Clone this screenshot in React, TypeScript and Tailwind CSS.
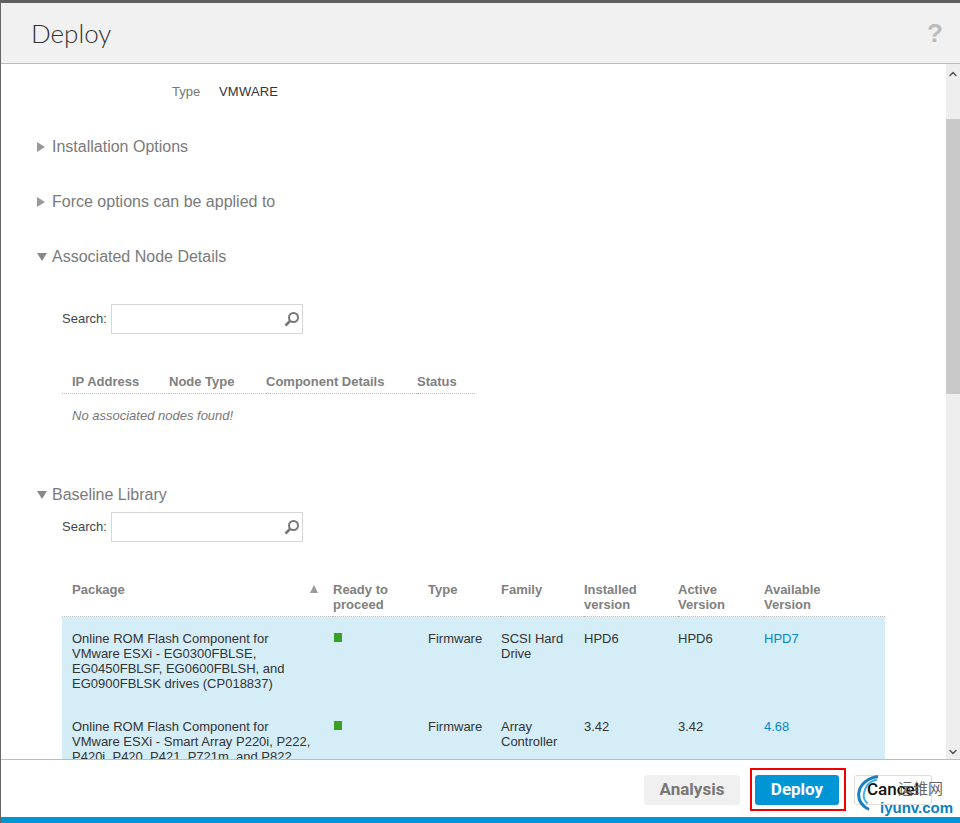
import React from "react";
import { ChevronDown, ChevronUp } from "lucide-react";

const rows = [
  {
    name: "Online ROM Flash Component for VMware ESXi - EG0300FBLSE, EG0450FBLSF, EG0600FBLSH, and EG0900FBLSK drives (CP018837)",
    type: "Firmware",
    family: "SCSI Hard Drive",
    installed: "HPD6",
    active: "HPD6",
    available: "HPD7",
  },
  {
    name: "Online ROM Flash Component for VMware ESXi - Smart Array P220i, P222, P420i, P420, P421, P721m, and P822",
    type: "Firmware",
    family: "Array Controller",
    installed: "3.42",
    active: "3.42",
    available: "4.68",
  },
];

const SearchIcon = () => (
  <svg width="16" height="16" viewBox="0 0 16 16" fill="none" stroke="#777" className="absolute right-[2px] top-[6px]">
    <circle cx="9.5" cy="6.5" r="4.5" strokeWidth="2" />
    <path d="M6 10 L1.5 14.5" strokeWidth="2.6" />
  </svg>
);

const SearchBox = () => (
  <div className="flex items-center text-[13px] text-[#444]">
    <span className="w-[49px]">Search:</span>
    <div className="relative h-[30px] w-[192px] border border-[#d6d6d6] bg-white">
      <SearchIcon />
    </div>
  </div>
);

const Section = ({ title, open }: { title: string; open?: boolean }) => (
  <div className="flex h-[22px] items-center text-[16px] text-[#7a7a7a]">
    <span className="flex w-[15px] items-center">
      {open ? (
        <span className="h-0 w-0 border-x-[5px] border-t-[8px] border-x-transparent border-t-[#888]" />
      ) : (
        <span className="h-0 w-0 border-y-[5px] border-l-[8px] border-y-transparent border-l-[#999]" />
      )}
    </span>
    {title}
  </div>
);

const th = "border-b border-dotted border-[#bbb] text-left align-top font-bold text-[#808080]";

export default function App() {
  return (
    <div className="relative flex h-[823px] w-[960px] flex-col overflow-hidden border-l border-[#666] bg-white font-['Liberation_Sans',Arial,sans-serif]">
      <div className="h-[3px] shrink-0 bg-[#5f5f5f]" />
      <header className="flex h-[61px] shrink-0 items-center justify-between border-b border-[#bdbdbd] bg-[#f1f1f1] pl-[30px] pr-[17px]">
        <h1 className="font-['Lato',sans-serif] text-[26px] font-light text-[#333]">Deploy</h1>
        <span className="text-[26px] font-bold text-[#bbb]">?</span>
      </header>

      <div className="flex min-h-0 flex-1">
        <main className="min-w-0 flex-1 overflow-hidden pl-[36px] pt-[18px]">
          <div className="flex h-[20px] items-center pl-[135px] text-[13px]">
            <span className="w-[47px] text-[#777]">Type</span>
            <span className="tracking-[0.2px] text-[#333]">VMWARE</span>
          </div>

          <div className="mt-[34px] flex flex-col gap-[33px]">
            <Section title="Installation Options" />
            <Section title="Force options can be applied to" />
            <Section title="Associated Node Details" open />
          </div>

          <div className="ml-[25px] mt-[36px]">
            <SearchBox />
          </div>

          <table className="ml-[25px] mt-[40px] w-[413px] table-fixed border-separate border-spacing-0 text-[13px] leading-[15px]">
            <thead>
              <tr>
                <th className={`${th} w-[107px] pb-[4px] pl-[10px]`}>IP Address</th>
                <th className={`${th} w-[97px] pb-[4px]`}>Node Type</th>
                <th className={`${th} w-[151px] pb-[4px]`}>Component Details</th>
                <th className={`${th} pb-[4px]`}>Status</th>
              </tr>
            </thead>
            <tbody>
              <tr>
                <td colSpan={4} className="pl-[10px] pt-[14px] italic text-[#777]">
                  No associated nodes found!
                </td>
              </tr>
            </tbody>
          </table>

          <div className="mt-[61px]">
            <Section title="Baseline Library" open />
          </div>
          <div className="ml-[25px] mt-[6px]">
            <SearchBox />
          </div>

          <table className="ml-[25px] mt-[40px] w-[823px] table-fixed border-separate border-spacing-0 text-[13px] leading-[15px]">
            <thead>
              <tr>
                <th className={`${th} relative w-[271px] pb-[4px] pl-[10px]`}>
                  Package
                  <span className="absolute right-[15px] top-[3px] h-0 w-0 border-x-[4px] border-b-[8px] border-x-transparent border-b-[#999]" />
                </th>
                <th className={`${th} w-[95px] pb-[4px] pr-5`}>Ready to proceed</th>
                <th className={`${th} w-[73px] pb-[4px]`}>Type</th>
                <th className={`${th} w-[83px] pb-[4px]`}>Family</th>
                <th className={`${th} w-[94px] pb-[4px] pr-5`}>Installed version</th>
                <th className={`${th} w-[86px] pb-[4px] pr-5`}>Active Version</th>
                <th className={`${th} pb-[4px] pr-[50px]`}>Available Version</th>
              </tr>
            </thead>
            <tbody className="bg-[#d4edf7] text-[#333]">
              {rows.map((row) => (
                <tr key={row.available} className="h-[88px] align-top">
                  <td className="pl-[10px] pr-[20px] pt-[14px]">{row.name}</td>
                  <td className="pt-[16px]">
                    <div className="ml-px h-[9px] w-[8px] bg-[#3aa023]" />
                  </td>
                  <td className="pt-[14px]">{row.type}</td>
                  <td className="pr-2 pt-[14px]">{row.family}</td>
                  <td className="pt-[14px]">{row.installed}</td>
                  <td className="pt-[14px]">{row.active}</td>
                  <td className="pt-[14px] text-[#0a86c6]">{row.available}</td>
                </tr>
              ))}
            </tbody>
          </table>
        </main>

        <div className="flex w-[14px] shrink-0 flex-col bg-[#eeeeee]">
          <ChevronUp size={12} strokeWidth={3} className="ml-px mt-[4px] text-[#555]" />
          <div className="mt-[39px] h-[275px] bg-[#c9c9c9]" />
          <ChevronDown size={12} strokeWidth={3} className="ml-px mt-auto mb-[1px] text-[#555]" />
        </div>
      </div>

      <footer className="flex h-[58px] shrink-0 items-center justify-end border-t border-[#bdbdbd] bg-white pr-[28px] pt-[2px] font-['Roboto',sans-serif] text-[17px] font-bold">
        <button className="mr-[10px] h-[30px] w-[96px] rounded-[3px] bg-[#f0f0f0] text-[#777]">Analysis</button>
        <div className="mr-[8px] flex h-[43px] w-[96px] items-center border-2 border-[#f00000] pl-[3px]">
          <button className="h-[30px] w-[84px] rounded-[3px] bg-[#0096d6] text-white">Deploy</button>
        </div>
        <button className="h-[30px] w-[78px] rounded-[3px] border border-[#ddd] bg-white font-medium text-[#111]">Cancel</button>
      </footer>
      <div className="h-[6px] shrink-0 bg-[#0096d6]" />

      {/* watermark over the cancel button */}
      <div className="pointer-events-none absolute left-[856px] top-[775px] h-[44px] w-[104px]">
        <svg width="44" height="44" viewBox="0 0 44 44" fill="none" className="absolute left-0 top-0">
          <path d="M21 1.5 C11 3 3 9 1.8 18 C1 25 5 31 12 34.5" stroke="#1a7fc0" strokeWidth="3" />
          <path d="M20 4.5 C13 6 8 11 6.8 19 C6 23 8 26 10.5 28.5" stroke="#3fb2e2" strokeWidth="2" />
        </svg>
        <span className="absolute left-[41px] top-[3px] font-['Noto_Sans_CJK_SC',sans-serif] text-[15px] leading-[20px] text-[#666]">运维网</span>
        <span className="absolute left-[23px] top-[24px] font-['Liberation_Sans',sans-serif] text-[15px] font-bold leading-[18px] text-[#0a7fc4]">iyunv.com</span>
      </div>
    </div>
  );
}
